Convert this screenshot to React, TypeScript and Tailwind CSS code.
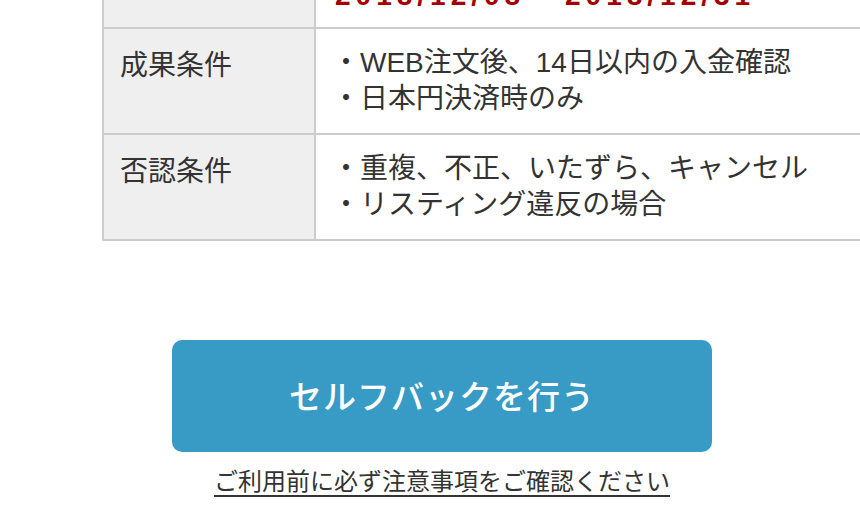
import React from "react";

const font = { fontFamily: '"Noto Sans CJK JP", "Noto Sans", sans-serif' };
const cellFont = {
  fontFamily: '"Liberation Sans", "Noto Sans CJK JP", sans-serif',
};

interface RowProps {
  label: string;
  children: React.ReactNode;
  bodyClass?: string;
}

function Row({ label, children, bodyClass = "py-4" }: RowProps) {
  return (
    <div className="flex border-b-2 border-[#cccccc]">
      <div className="w-[212px] shrink-0 bg-[#efefef] border-r-2 border-[#cccccc] px-4 py-4 text-[28px] leading-[36px] text-[#333333]">
        {label}
      </div>
      <div
        className={`flex-1 bg-white px-4 text-[28px] leading-[36px] text-[#333333] ${bodyClass}`}
        style={cellFont}
      >
        {children}
      </div>
    </div>
  );
}

export default function App() {
  return (
    <div className="w-[860px] h-[518px] overflow-hidden bg-white" style={font}>
      <div className="ml-[102px] mt-[-41px] w-[820px] border-l-2 border-[#cccccc]">
        <Row label="" bodyClass="pt-[19px] pb-[13px]">
          <span className="pl-[3px] font-bold tracking-[5px] text-[#a40000]">
            2018/12/08 - 2018/12/31
          </span>
        </Row>
        <Row label="成果条件">
          <p>・WEB注文後、14日以内の入金確認</p>
          <p>・日本円決済時のみ</p>
        </Row>
        <Row label="否認条件">
          <p>・重複、不正、いたずら、キャンセル</p>
          <p>・リスティング違反の場合</p>
        </Row>
      </div>

      <div className="ml-[102px] w-[680px] flex flex-col items-center">
        <button className="mt-[99px] w-[540px] h-[112px] rounded-[10px] bg-[#379bc6] text-white text-[33px] font-medium tracking-[1px]">
          セルフバックを行う
        </button>
        <a
          href="#"
          className="mt-[12px] text-[24px] leading-[32px] text-[#333333] underline underline-offset-[5px] decoration-[1.5px]"
        >
          ご利用前に必ず注意事項をご確認ください
        </a>
      </div>
    </div>
  );
}
